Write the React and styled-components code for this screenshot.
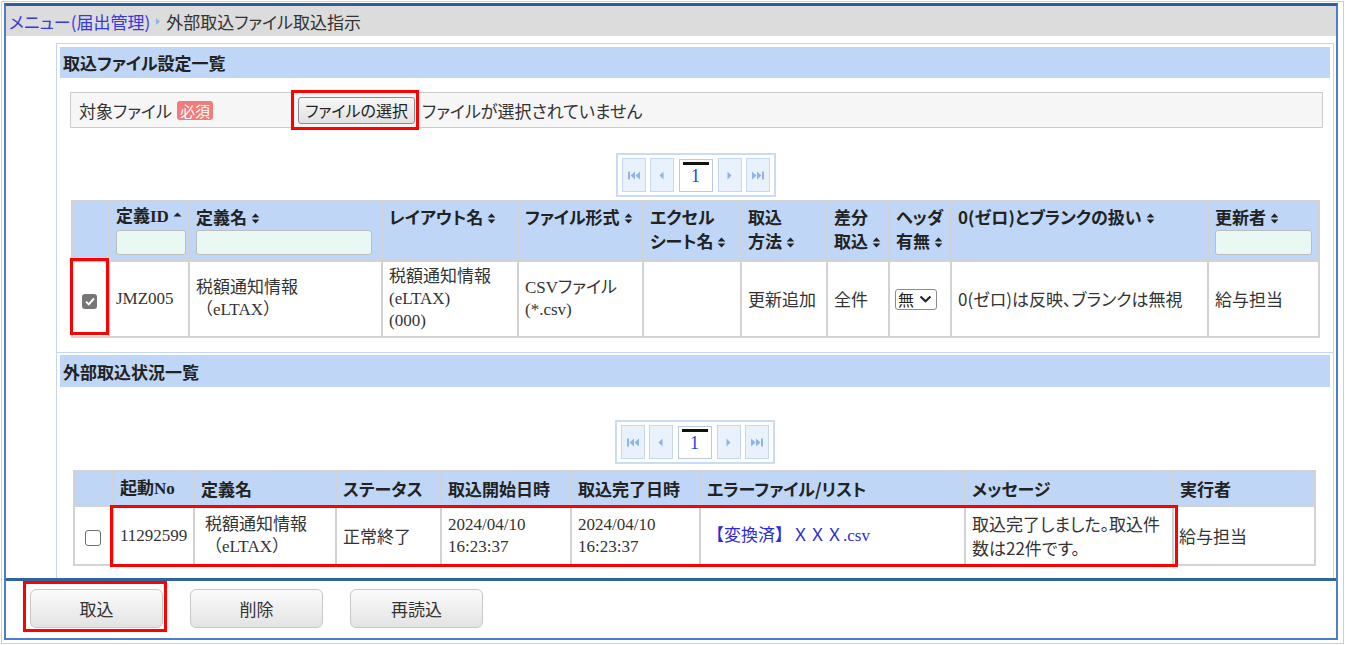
import React from "react";
import styled, { createGlobalStyle } from "styled-components";

const SANS = `"Noto Sans CJK JP", "Noto Sans", sans-serif`;
const SERIF = `"Liberation Serif", "Noto Sans CJK JP", serif`;

const GlobalStyle = createGlobalStyle`
  html, body {
    margin: 0;
    padding: 0;
    background: #fff;
  }
  body {
    font-family: ${SANS};
    font-size: 17px;
    color: #333;
    font-feature-settings: "palt";
  }
  * { box-sizing: border-box; }
`;

const Page = styled.div`
  width: 1345px;
  height: 645px;
  padding: 1px;
`;

const Chrome = styled.div`
  height: 100%;
  border: 1px solid #cfcfcf;
  padding: 1px 5px 3px 2px;
`;

const Frame = styled.div`
  height: 100%;
  display: flex;
  flex-direction: column;
  border: 2px solid #4a7dcf;
  border-top: 3px solid #2d5f98;
`;

const Breadcrumb = styled.div`
  height: 30px;
  background: #dcdcdc;
  display: flex;
  align-items: center;
  gap: 5px;
  padding-left: 3px;
  font-size: 17px;
  color: #333;
`;

const MenuLink = styled.span`
  color: #3838e0;
`;

const Main = styled.div`
  flex: 1;
  display: flex;
  padding: 7px 4px 0 50px;
  min-height: 0;
`;

const Panel = styled.div`
  flex: 1;
  border: 1px solid #c3d7f2;
  border-bottom: none;
  padding: 3px 3px 0;
  display: flex;
  flex-direction: column;
`;

const SectionHead = styled.div`
  height: ${(p) => p.$h}px;
  background: #bfd6f6;
  display: flex;
  align-items: center;
  padding-left: 3px;
  font-weight: bold;
  font-size: 17px;
  color: #222;
`;

const SectionBody = styled.div`
  padding: ${(p) => p.$pad};
  display: flex;
  flex-direction: column;
`;

const Section2 = styled.div`
  margin: 14px -3px 0;
  border-top: 1px solid #c3d7f2;
  padding: 2px 3px 0;
`;

/* file picker row */
const FileRow = styled.div`
  margin: 14px -3px 0 -1px;
  height: 36px;
  border: 1px solid #cccccc;
  background: #f6f6f6;
  display: flex;
  align-items: center;
  padding-left: 8px;
`;

const FieldLabel = styled.div`
  width: 219px;
  display: flex;
  align-items: center;
  gap: 5px;
`;

const Required = styled.span`
  background: #f27b7b;
  color: #fff;
  font-size: 15px;
  line-height: 19px;
  padding: 0 3px;
  border-radius: 3px;
`;

const Marked = styled.span`
  position: relative;
  display: inline-flex;
`;

const Callout = styled.span`
  position: absolute;
  left: ${(p) => p.$l}px;
  top: ${(p) => p.$t}px;
  width: ${(p) => p.$w}px;
  height: ${(p) => p.$h}px;
  border: 3px solid #f00;
  pointer-events: none;
  z-index: 2;
`;

const FileButton = styled.button`
  width: 117px;
  height: 27px;
  padding: 0;
  font-family: ${SANS};
  font-size: 16px;
  font-feature-settings: "palt";
  color: #222;
  background: linear-gradient(#f7f7f7, #e1e1e1);
  border: 1px solid #8a8a8a;
  border-radius: 3px;
`;

const FileNote = styled.span`
  margin-left: 7px;
`;

/* pager */
const PagerBox = styled.div`
  align-self: center;
  margin-top: ${(p) => p.$mt}px;
  display: flex;
  align-items: center;
  gap: 4px;
  border: 2px solid #cadcf4;
  padding: 3px 4px;
  background: #fff;
`;

const PageBtn = styled.span`
  width: 24px;
  height: 34px;
  background: #e9f1fc;
  border: 1px solid #c6d8f0;
  display: flex;
  align-items: center;
  justify-content: center;
`;

const PageNo = styled.span`
  width: 34px;
  height: 33px;
  margin: 0 1px;
  background: #fff;
  border: 1px solid #b9c9de;
  display: flex;
  flex-direction: column;
  align-items: center;
  padding-top: 2px;
  color: #2a3fd6;
  font-family: ${SERIF};
  font-size: 18px;
  line-height: 22px;

  &::before {
    content: "";
    width: 26px;
    height: 3px;
    background: #111;
  }
`;

const PagerIcon = ({ d, w = 14 }) => (
  <svg width={w} height="11" viewBox={`0 0 ${w} 11`}>
    <path d={d} fill="#8fb4e6" />
  </svg>
);

const Pager = ({ mt }) => (
  <PagerBox $mt={mt}>
    <PageBtn>
      <PagerIcon d="M1 1.5h2v8H1z M8 1.5 L3.5 5.5 L8 9.5z M13 1.5 L8.5 5.5 L13 9.5z" />
    </PageBtn>
    <PageBtn>
      <PagerIcon w={9} d="M6.5 1.5 L2.5 5.5 L6.5 9.5z" />
    </PageBtn>
    <PageNo>1</PageNo>
    <PageBtn>
      <PagerIcon w={9} d="M2.5 1.5 L6.5 5.5 L2.5 9.5z" />
    </PageBtn>
    <PageBtn>
      <PagerIcon d="M1 1.5 L5.5 5.5 L1 9.5z M6 1.5 L10.5 5.5 L6 9.5z M11 1.5h2v8h-2z" />
    </PageBtn>
  </PagerBox>
);

/* tables */
const TableWrap = styled.div`
  position: relative;
  margin-top: ${(p) => p.$mt}px;
`;

const Grid = styled.table`
  table-layout: fixed;
  width: ${(p) => p.$w}px;
  border-collapse: collapse;
  border: 2px solid #d2d2d2;
`;

const Th = styled.th`
  height: ${(p) => p.$h}px;
  background: #bfd6f6;
  border: 2px solid #d2d2d2;
  text-align: left;
  vertical-align: ${(p) => (p.$top ? "top" : "middle")};
  padding: ${(p) => (p.$top ? "3px 4px 0 6px" : "0 4px 0 6px")};
  font-family: ${(p) => (p.$serif ? SERIF : SANS)};
  font-weight: bold;
  font-size: 17px;
  line-height: 24px;
  color: #222;
`;

const Td = styled.td`
  height: ${(p) => p.$h}px;
  border: 2px solid #d2d2d2;
  background: #fff;
  vertical-align: middle;
  padding: 0 4px 0 ${(p) => p.$pl || 6}px;
  font-family: ${(p) => (p.$serif ? SERIF : SANS)};
  font-size: 17px;
  line-height: ${(p) => p.$lh || 22}px;
  color: ${(p) => (p.$link ? "#2b2bd8" : "#333")};
  font-feature-settings: ${(p) => (p.$link ? "normal" : "\"palt\"")};
`;

const Wide = styled.span`
  font-feature-settings: normal;
`;

const Filter = styled.div`
  margin-top: 1px;
  width: ${(p) => p.$w}px;
  height: 25px;
  background: #eaf8f4;
  border: 1px solid #bcbcbc;
  border-radius: 3px;
`;

const SortSvg = styled.svg`
  margin-left: 4px;
  vertical-align: -1px;
`;

const SortMark = ({ asc }) => (
  <SortSvg width="9" height="13" viewBox="0 0 9 13">
    {asc ? (
      <path d="M0.5 6.5 L4.5 2.5 L8.5 6.5 Z" fill="#222" />
    ) : (
      <>
        <path d="M0.7 5.4 L4.5 1.4 L8.3 5.4 Z" fill="#222" />
        <path d="M0.7 7.6 L4.5 11.6 L8.3 7.6 Z" fill="#222" />
      </>
    )}
  </SortSvg>
);

const Check = styled.span`
  display: inline-flex;
  align-items: center;
  justify-content: center;
  width: ${(p) => (p.$on ? 15 : 16)}px;
  height: ${(p) => (p.$on ? 15 : 16)}px;
  border-radius: 3px;
  background: ${(p) => (p.$on ? "#767676" : "#fff")};
  border: ${(p) => (p.$on ? "none" : "1.5px solid #6f6f6f")};
  vertical-align: middle;
`;

const SelectBox = styled.span`
  display: inline-flex;
  align-items: center;
  gap: 5px;
  height: 21px;
  padding: 0 4px 0 2px;
  border: 1px solid #8c8c8c;
  border-radius: 3px;
  background: #fff;
  font-size: 16px;
  color: #222;
`;

/* footer */
const FooterBar = styled.div`
  border-top: 3px solid #2f659c;
  height: 60px;
  display: flex;
  gap: 27px;
  padding: 8px 0 0 24px;
`;

const ActionButton = styled.button`
  width: 133px;
  height: 39px;
  padding: 0;
  font-family: ${SANS};
  font-size: 17px;
  color: #333;
  background: linear-gradient(#fbfbfb, #e3e3e3);
  border: 1px solid #c8c8c8;
  border-radius: 6px;
`;

export default function App() {
  return (
    <>
      <GlobalStyle />
      <Page>
        <Chrome>
          <Frame>
            <Breadcrumb>
              <MenuLink>メニュー(届出管理)</MenuLink>
              <svg width="6" height="9" viewBox="0 0 6 9">
                <path d="M1 1 L5 4.5 L1 8z" fill="#8eb3e4" />
              </svg>
              <span>外部取込ファイル取込指示</span>
            </Breadcrumb>

            <Main>
              <Panel>
                <SectionHead $h={31}>取込ファイル設定一覧</SectionHead>
                <SectionBody $pad="0 10px 0 11px">
                  <FileRow>
                    <FieldLabel>
                      対象ファイル<Required>必須</Required>
                    </FieldLabel>
                    <Marked>
                      <FileButton>ファイルの選択</FileButton>
                      <Callout $l={-7} $t={-7} $w={128} $h={40} />
                    </Marked>
                    <FileNote>ファイルが選択されていません</FileNote>
                  </FileRow>

                  <Pager mt={25} />

                  <TableWrap $mt={3}>
                    <Grid $w={1247}>
                      <colgroup>
                        {[37, 80, 193, 136, 125, 98, 86, 62, 62, 257, 111].map((w, i) => (
                          <col key={i} style={{ width: w }} />
                        ))}
                      </colgroup>
                      <thead>
                        <tr>
                          <Th $h={60} $top />
                          <Th $h={60} $top $serif>
                            定義ID<SortMark asc />
                            <Filter $w={70} />
                          </Th>
                          <Th $h={60} $top>
                            定義名<SortMark />
                            <Filter $w={176} />
                          </Th>
                          <Th $h={60} $top>レイアウト名<SortMark /></Th>
                          <Th $h={60} $top>ファイル形式<SortMark /></Th>
                          <Th $h={60} $top>エクセル<br />シート名<SortMark /></Th>
                          <Th $h={60} $top>取込<br />方法<SortMark /></Th>
                          <Th $h={60} $top>差分<br />取込<SortMark /></Th>
                          <Th $h={60} $top>ヘッダ<br />有無<SortMark /></Th>
                          <Th $h={60} $top>0(ゼロ)とブランクの扱い<SortMark /></Th>
                          <Th $h={60} $top>
                            更新者<SortMark />
                            <Filter $w={97} />
                          </Th>
                        </tr>
                      </thead>
                      <tbody>
                        <tr>
                          <Td $h={76} $pl={9}>
                            <Check $on>
                              <svg width="10" height="9" viewBox="0 0 10 9">
                                <path d="M1 4.6 L3.8 7.4 L9 1.4" fill="none" stroke="#fff" strokeWidth="2" />
                              </svg>
                            </Check>
                          </Td>
                          <Td $serif>JMZ005</Td>
                          <Td $serif>税額通知情報<br /><Wide>（eLTAX）</Wide></Td>
                          <Td $serif>税額通知情報<br />(eLTAX)<br />(000)</Td>
                          <Td $serif>CSVファイル<br />(*.csv)</Td>
                          <Td />
                          <Td>更新追加</Td>
                          <Td>全件</Td>
                          <Td $pl={5}>
                            <SelectBox>
                              無
                              <svg width="13" height="8" viewBox="0 0 13 8">
                                <path d="M1.5 1.5 L6.5 6.3 L11.5 1.5" fill="none" stroke="#222" strokeWidth="2" />
                              </svg>
                            </SelectBox>
                          </Td>
                          <Td>0(ゼロ)は反映、ブランクは無視</Td>
                          <Td>給与担当</Td>
                        </tr>
                      </tbody>
                    </Grid>
                    <Callout $l={-1} $t={58} $w={39} $h={77} />
                  </TableWrap>
                </SectionBody>

                <Section2>
                  <SectionHead $h={32}>外部取込状況一覧</SectionHead>
                  <SectionBody $pad="0 14px 0 13px">
                    <Pager mt={33} />

                    <TableWrap $mt={6}>
                      <Grid $w={1241}>
                        <colgroup>
                          {[39, 81, 142, 105, 130, 129, 265, 208, 142].map((w, i) => (
                            <col key={i} style={{ width: w }} />
                          ))}
                        </colgroup>
                        <thead>
                          <tr>
                            <Th $h={35} />
                            <Th $h={35} $serif>起動No</Th>
                            <Th $h={35}>定義名</Th>
                            <Th $h={35}>ステータス</Th>
                            <Th $h={35}>取込開始日時</Th>
                            <Th $h={35}>取込完了日時</Th>
                            <Th $h={35}>エラーファイル/リスト</Th>
                            <Th $h={35}>メッセージ</Th>
                            <Th $h={35}>実行者</Th>
                          </tr>
                        </thead>
                        <tbody>
                          <tr>
                            <Td $h={59} $pl={10}>
                              <Check />
                            </Td>
                            <Td $serif>11292599</Td>
                            <Td $serif $pl={10}>税額通知情報<br /><Wide>（eLTAX）</Wide></Td>
                            <Td>正常終了</Td>
                            <Td $serif>2024/04/10<br />16:23:37</Td>
                            <Td $serif>2024/04/10<br />16:23:37</Td>
                            <Td $serif $link>【変換済】ＸＸＸ.csv</Td>
                            <Td $lh={24}>取込完了しました。取込件<br />数は22件です。</Td>
                            <Td $pl={5}>給与担当</Td>
                          </tr>
                        </tbody>
                      </Grid>
                      <Callout $l={37} $t={35} $w={1068} $h={62} />
                    </TableWrap>
                  </SectionBody>
                </Section2>
              </Panel>
            </Main>

            <FooterBar>
              <Marked>
                <ActionButton>取込</ActionButton>
                <Callout $l={-7} $t={-8} $w={144} $h={51} />
              </Marked>
              <ActionButton>削除</ActionButton>
              <ActionButton>再読込</ActionButton>
            </FooterBar>
          </Frame>
        </Chrome>
      </Page>
    </>
  );
}
